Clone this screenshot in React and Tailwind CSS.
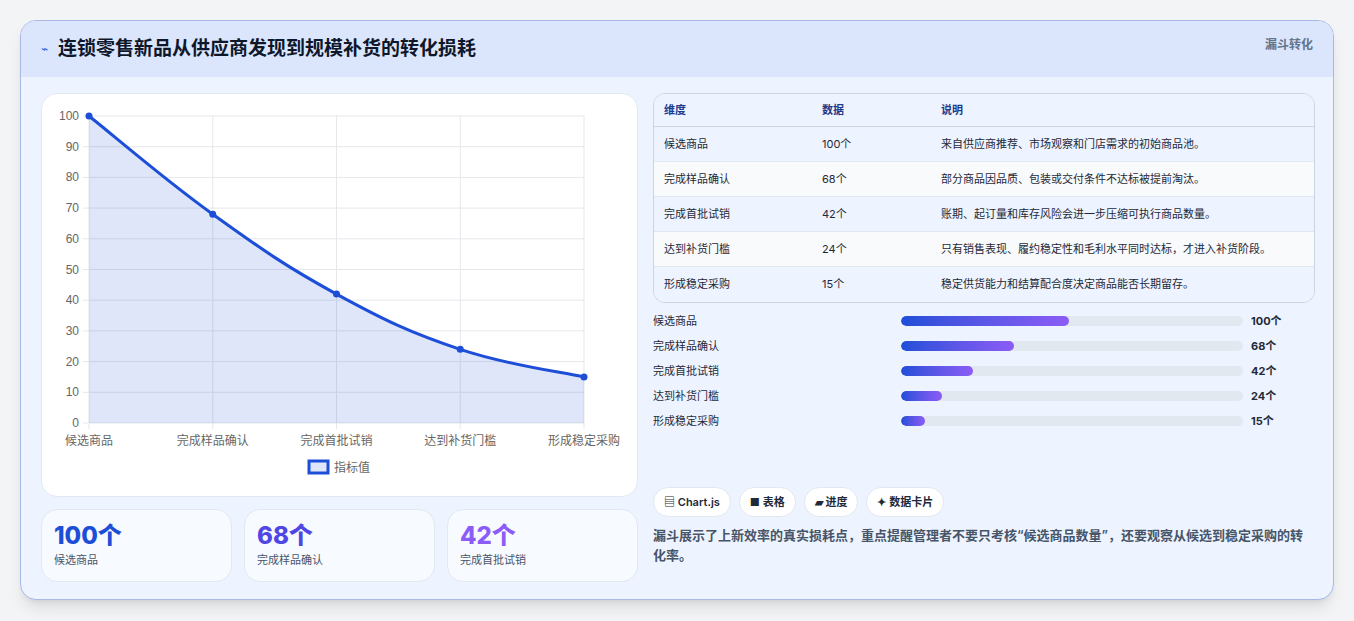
import React from 'react';

const rows = [
  { name: '候选商品', v: 100, desc: '来自供应商推荐、市场观察和门店需求的初始商品池。', w: '49%' },
  { name: '完成样品确认', v: 68, desc: '部分商品因品质、包装或交付条件不达标被提前淘汰。', w: '33%' },
  { name: '完成首批试销', v: 42, desc: '账期、起订量和库存风险会进一步压缩可执行商品数量。', w: '21%' },
  { name: '达到补货门槛', v: 24, desc: '只有销售表现、履约稳定性和毛利水平同时达标，才进入补货阶段。', w: '12%' },
  { name: '形成稳定采购', v: 15, desc: '稳定供货能力和结算配合度决定商品能否长期留存。', w: '7%' },
];

function Chart() {
  const L = 47, T = 22, W = 495, H = 307;
  const xs = rows.map((_, i) => L + (W * i) / 4);
  const ys = rows.map((r) => T + H - (H * r.v) / 100);
  const pts = xs.map((x, i) => [x, ys[i]]);
  let d = `M${pts[0][0]},${pts[0][1]}`;
  for (let i = 1; i < pts.length; i++) {
    const p0 = pts[Math.max(0, i - 2)], p1 = pts[i - 1], p2 = pts[i], p3 = pts[Math.min(pts.length - 1, i + 1)];
    const t = 0.2;
    d += ` C${p1[0] + (p2[0] - p0[0]) * t},${p1[1] + (p2[1] - p0[1]) * t} ${p2[0] - (p3[0] - p1[0]) * t},${p2[1] - (p3[1] - p1[1]) * t} ${p2[0]},${p2[1]}`;
  }
  const area = d + ` L${L + W},${T + H} L${L},${T + H} Z`;
  return (
    <svg width="597" height="403" style={{ fontFamily: 'Liberation Sans, sans-serif' }}>
      {[0, 10, 20, 30, 40, 50, 60, 70, 80, 90, 100].map((v) => {
        const y = T + H - (H * v) / 100;
        return (
          <g key={v}>
            <line x1={L - 6} x2={L + W} y1={y} y2={y} stroke="#e5e7eb" />
            <text x={L - 10} y={y + 4} fontSize="12" fill="#666" textAnchor="end">{v}</text>
          </g>
        );
      })}
      {xs.map((x, i) => (
        <g key={i}>
          <line x1={x} x2={x} y1={T} y2={T + H + 6} stroke="#e5e7eb" />
          <text x={x} y={T + H + 22} fontSize="12" fill="#666" textAnchor="middle" style={{ fontFamily: 'Noto Sans CJK SC, sans-serif' }}>{rows[i].name}</text>
        </g>
      ))}
      <path d={area} fill="rgba(29,78,216,0.14)" />
      <path d={d} fill="none" stroke="#1d4ed8" strokeWidth="3" />
      {pts.map((p, i) => <circle key={i} cx={p[0]} cy={p[1]} r="3.5" fill="#1d4ed8" />)}
      <rect x="267" y="367" width="19" height="12" fill="rgba(29,78,216,0.14)" stroke="#1d4ed8" strokeWidth="3" />
      <text x="292" y="378" fontSize="12" fill="#666" style={{ fontFamily: 'Noto Sans CJK SC, sans-serif' }}>指标值</text>
    </svg>
  );
}

export default function App() {
  return (
    <div className="w-[1354px] h-[621px] bg-[#f3f4f6] pt-5 pl-5" style={{ fontFamily: 'Inter, "Noto Sans CJK SC", sans-serif' }}>
      <div className="w-[1314px] h-[580px] rounded-2xl border border-[#aab8e6] bg-[#eef4ff] overflow-hidden shadow-lg">
        <div className="h-[56px] bg-[#dbe6fd] flex items-center justify-between px-5">
          <div className="flex items-center gap-2.5">
            <span className="text-[#2563eb] text-xs">⌁</span>
            <span className="text-[19px] font-bold text-[#0f172a]">连锁零售新品从供应商发现到规模补货的转化损耗</span>
          </div>
          <span className="text-xs font-semibold text-[#64748b] self-start mt-4">漏斗转化</span>
        </div>
        <div className="flex gap-[15px] pl-5 pr-[18px] pt-4">
          <div className="w-[597px] flex flex-col gap-3">
            <div className="h-[404px] bg-white rounded-2xl border border-[#e2e8f0]"><Chart /></div>
            <div className="grid grid-cols-3 gap-3">
              {[['100个', '候选商品', '#1d4ed8'], ['68个', '完成样品确认', '#4f46e5'], ['42个', '完成首批试销', '#8b5cf6']].map(([v, l, c]) => (
                <div key={l} className="h-[73px] bg-[#f7faff] border border-[#e2e8f0] rounded-2xl px-3 pt-2.5">
                  <div className="text-[24px] font-extrabold leading-8" style={{ color: c }}>{v}</div>
                  <div className="text-[11px] text-[#475569]">{l}</div>
                </div>
              ))}
            </div>
          </div>
          <div className="w-[662px] flex flex-col">
            <div className="rounded-xl border border-[#cbd5e1] overflow-hidden text-[11px]">
              <div className="flex h-[33px] items-center bg-[#eef4ff] border-b border-[#cbd5e1] font-semibold text-[#1e3a8a]">
                <div className="w-[168px] pl-2.5">维度</div><div className="w-[119px]">数据</div><div>说明</div>
              </div>
              {rows.map((r, i) => (
                <div key={r.name} className={`flex h-[35px] items-center text-[#1f2937] ${i < 4 ? 'border-b border-[#e2e8f0]' : ''} ${i % 2 ? 'bg-[#f8fafc]' : 'bg-[#eef4ff]'}`}>
                  <div className="w-[168px] pl-2.5">{r.name}</div><div className="w-[119px]">{r.v}个</div><div>{r.desc}</div>
                </div>
              ))}
            </div>
            <div className="mt-2.5 flex flex-col gap-[9px] text-[11px]">
              {rows.map((r) => (
                <div key={r.name} className="flex items-center h-4">
                  <div className="w-[248px] text-[#1f2937]">{r.name}</div>
                  <div className="w-[342px] h-2.5 rounded-full bg-[#e2e8f0] overflow-hidden">
                    <div className="h-full rounded-full bg-gradient-to-r from-[#1d4ed8] to-[#8b5cf6]" style={{ width: r.w }} />
                  </div>
                  <div className="ml-2 font-bold text-[#1f2937]">{r.v}个</div>
                </div>
              ))}
            </div>
            <div className="mt-auto flex gap-2 text-[11px] font-semibold text-[#1f2937]">
              {['▤ Chart.js', '■ 表格', '▰ 进度', '✦ 数据卡片'].map((t) => (
                <span key={t} className="bg-white border border-[#e2e8f0] rounded-full px-2.5 py-1.5">{t}</span>
              ))}
            </div>
            <p className="mt-2 mb-[17px] text-[13px] leading-5 font-semibold text-[#475569]">漏斗展示了上新效率的真实损耗点，重点提醒管理者不要只考核“候选商品数量”，还要观察从候选到稳定采购的转化率。</p>
          </div>
        </div>
      </div>
    </div>
  );
}
